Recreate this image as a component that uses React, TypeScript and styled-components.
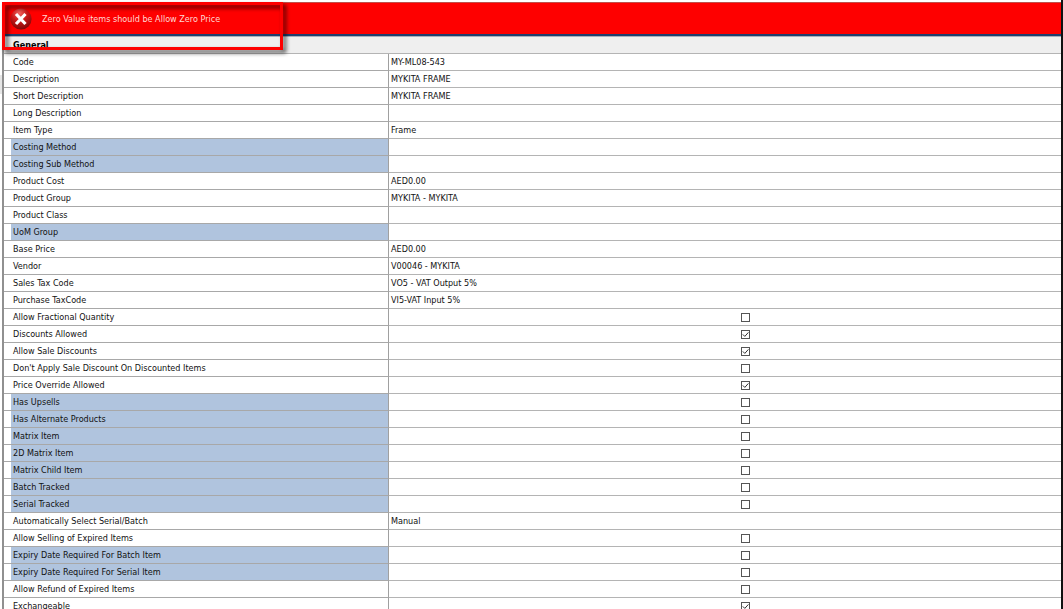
import React from "react";
import styled, { createGlobalStyle } from "styled-components";

const Global = createGlobalStyle`
  * { box-sizing: border-box; }
  body { margin: 0; background: #fff; font-family: "DejaVu Sans Condensed", "DejaVu Sans", sans-serif; font-size: 9px; color: #111; }
`;

const Page = styled.div`
  position: relative;
  height: 100vh;
  overflow: hidden;
  padding: 2px 0 0 2px;
  border-right: 2px solid #111;
  background: linear-gradient(#e6e6e6, #e6e6e6) 0 75px / 2px 19px no-repeat;
`;

const Banner = styled.div`
  display: flex;
  align-items: center;
  gap: 10px;
  height: 34px;
  padding-left: 8px;
  color: #ffd9d4;
  background: #fe0000;
  border-top: 1px solid #c0504a;
  border-bottom: 2px solid #1f3f6e;
`;

const Grid = styled.table`
  width: 100%;
  table-layout: fixed;
  border-collapse: separate;
  border-spacing: 0;
  border-left: 2px solid #909090;
`;

const LabelCol = styled.col`
  width: 385px;
`;

const GroupHead = styled.th`
  height: 18px;
  padding: 0 0 0 9px;
  text-align: left;
  line-height: 16px;
  color: #000;
  background: #efefef;
  border-top: 1px solid #a9b0ba;
  border-bottom: 1px solid #b4b4b4;
`;

const LabelCell = styled.th<{ $locked?: boolean }>`
  height: 17px;
  padding: 0 0 0 7px;
  text-align: left;
  font-weight: normal;
  line-height: 16px;
  border-bottom: 1px solid #a8a8a8;
  border-right: 1px solid #a0a0a0;

  label, span {
    display: block;
    padding-left: 2px;
    background: ${(p) => (p.$locked ? "#b0c4de" : "transparent")};
  }
`;

const ValueCell = styled.td<{ $check?: boolean }>`
  height: 17px;
  padding: 0 0 0 ${(p) => (p.$check ? "41px" : "2px")};
  text-align: ${(p) => (p.$check ? "center" : "left")};
  line-height: 16px;
  border-bottom: 1px solid #b4b4b4;
`;

const Tick = styled.input`
  appearance: none;
  display: block;
  width: 9px;
  height: 9px;
  margin: 0 auto;
  background: #fff;
  border: 1px solid #555;

  &:checked {
    background: #fff url("data:image/svg+xml,%3Csvg xmlns='http://www.w3.org/2000/svg' viewBox='0 0 7 7'%3E%3Cpath d='M.8 3.4 2.8 5.4 6.4 1.4' fill='none' stroke='%23333'/%3E%3C/svg%3E");
  }
`;

const Callout = styled.div`
  position: absolute;
  top: 2px;
  left: 2px;
  width: 281px;
  height: 48px;
  border: 3px solid #fe0000;
  filter: drop-shadow(3px 3px 2px rgba(0, 0, 0, 0.7));
  pointer-events: none;
`;

const ErrorIcon = () => (
  <svg width="22" height="22" viewBox="0 0 22 22" aria-hidden="true">
    <defs>
      <radialGradient id="ball" cx="42%" cy="22%" r="80%">
        <stop offset="0" stopColor="#f0645e" />
        <stop offset="0.45" stopColor="#cc1a1a" />
        <stop offset="1" stopColor="#7c0606" />
      </radialGradient>
    </defs>
    <circle cx="11" cy="11" r="10.6" fill="url(#ball)" />
    <path d="M6 6 15.5 16M15.5 6 6 16" stroke="#fff" strokeWidth="3.2" />
  </svg>
);

type Row = { label: string; value?: string; locked?: boolean; checked?: boolean };

const rows: Row[] = [
  { label: "Code", value: "MY-ML08-543" },
  { label: "Description", value: "MYKITA FRAME" },
  { label: "Short Description", value: "MYKITA FRAME" },
  { label: "Long Description" },
  { label: "Item Type", value: "Frame" },
  { label: "Costing Method", locked: true },
  { label: "Costing Sub Method", locked: true },
  { label: "Product Cost", value: "AED0.00" },
  { label: "Product Group", value: "MYKITA - MYKITA" },
  { label: "Product Class" },
  { label: "UoM Group", locked: true },
  { label: "Base Price", value: "AED0.00" },
  { label: "Vendor", value: "V00046 - MYKITA" },
  { label: "Sales Tax Code", value: "VO5 - VAT Output 5%" },
  { label: "Purchase TaxCode", value: "VI5-VAT Input 5%" },
  { label: "Allow Fractional Quantity", checked: false },
  { label: "Discounts Allowed", checked: true },
  { label: "Allow Sale Discounts", checked: true },
  { label: "Don't Apply Sale Discount On Discounted Items", checked: false },
  { label: "Price Override Allowed", checked: true },
  { label: "Has Upsells", locked: true, checked: false },
  { label: "Has Alternate Products", locked: true, checked: false },
  { label: "Matrix Item", locked: true, checked: false },
  { label: "2D Matrix Item", locked: true, checked: false },
  { label: "Matrix Child Item", locked: true, checked: false },
  { label: "Batch Tracked", locked: true, checked: false },
  { label: "Serial Tracked", locked: true, checked: false },
  { label: "Automatically Select Serial/Batch", value: "Manual" },
  { label: "Allow Selling of Expired Items", checked: false },
  { label: "Expiry Date Required For Batch Item", locked: true, checked: false },
  { label: "Expiry Date Required For Serial Item", locked: true, checked: false },
  { label: "Allow Refund of Expired Items", checked: false },
  { label: "Exchangeable", checked: true },
];

const PropertyRow = ({ row, id }: { row: Row; id: string }) => {
  const check = row.checked !== undefined;
  return (
    <tr>
      <LabelCell scope="row" $locked={row.locked}>
        {check ? <label htmlFor={id}>{row.label}</label> : <span>{row.label}</span>}
      </LabelCell>
      <ValueCell $check={check}>
        {check ? <Tick id={id} type="checkbox" defaultChecked={row.checked} /> : row.value}
      </ValueCell>
    </tr>
  );
};

export default function App() {
  return (
    <Page>
      <Global />
      <Banner role="alert">
        <ErrorIcon />
        Zero Value items should be Allow Zero Price
      </Banner>
      <Grid>
        <colgroup>
          <LabelCol />
          <col />
        </colgroup>
        <thead>
          <tr>
            <GroupHead colSpan={2}>General</GroupHead>
          </tr>
        </thead>
        <tbody>
          {rows.map((row, i) => (
            <PropertyRow key={row.label} row={row} id={`property-${i}`} />
          ))}
        </tbody>
      </Grid>
      <Callout />
    </Page>
  );
}
